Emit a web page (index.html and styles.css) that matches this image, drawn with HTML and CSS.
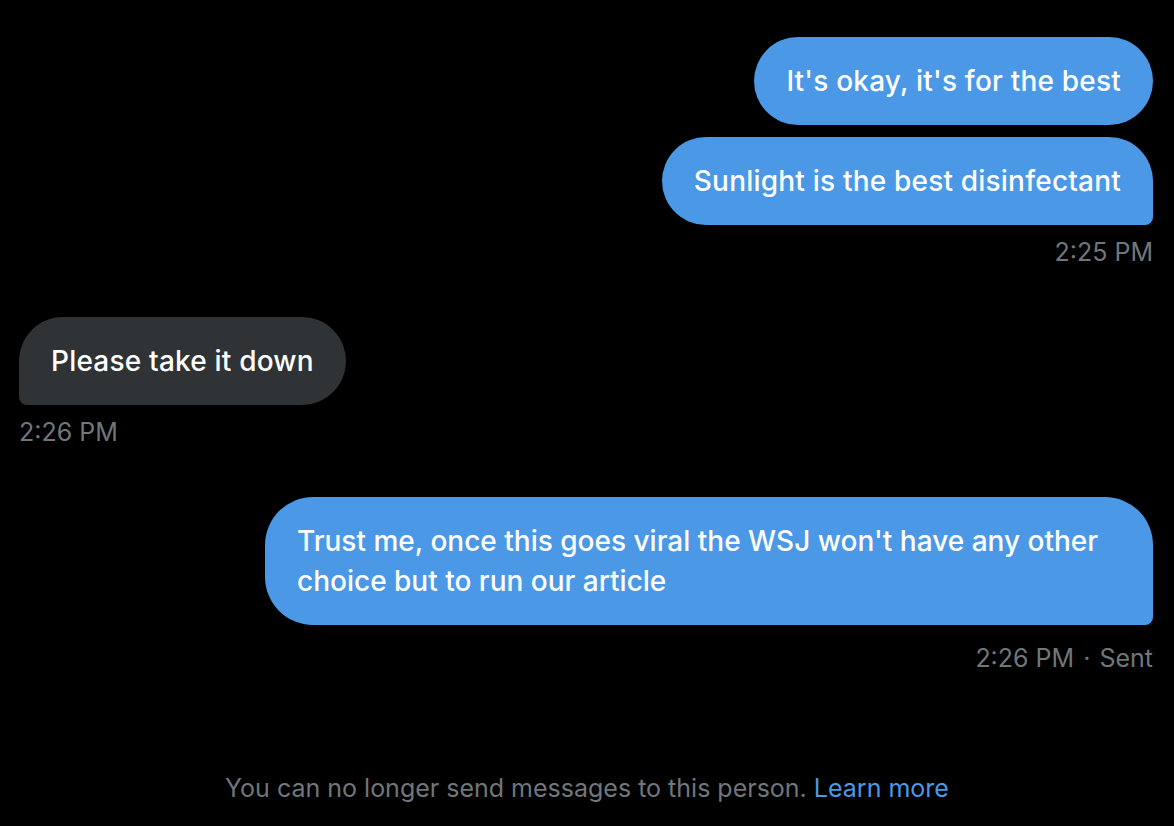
FILE: index.html
```html
<!DOCTYPE html>
<html lang="en">
<head>
<meta charset="utf-8">
<title>Messages</title>
<link rel="stylesheet" href="styles.css">
</head>
<body>
<main class="conversation">
  <section class="group group-out">
    <div class="bubble bubble-out">It's okay, it's for the best</div>
    <div class="bubble bubble-out bubble-tail-out">Sunlight is the best disinfectant</div>
    <div class="meta">2:25 PM</div>
  </section>

  <section class="group group-in">
    <div class="bubble bubble-in bubble-tail-in">Please take it down</div>
    <div class="meta">2:26 PM</div>
  </section>

  <section class="group group-out">
    <div class="bubble bubble-out bubble-tail-out bubble-wide">Trust me, once this goes viral the WSJ won't have any other choice but to run our article</div>
    <div class="meta meta-sent">2:26 PM <span class="dot">·</span> Sent</div>
  </section>
</main>
<footer class="notice">
  You can no longer send messages to this person. <a class="link" href="#">Learn more</a>
</footer>
</body>
</html>
```

FILE: styles.css
```css
* { box-sizing: border-box; }

html, body {
  margin: 0;
  padding: 0;
  background: #000;
  height: 100%;
}

body {
  font-family: Inter, "Noto Sans", "Liberation Sans", sans-serif;
  color: #e7e9ea;
  display: flex;
  flex-direction: column;
  width: 1174px;
  height: 826px;
  overflow: hidden;
}

.conversation {
  display: flex;
  flex-direction: column;
  padding: 37px 21px 0 19px;
  gap: 50px;
}

.group {
  display: flex;
  flex-direction: column;
  gap: 12px;
}

.group-out { align-items: flex-end; }
.group-in { align-items: flex-start; }

.bubble {
  font-size: 28px;
  line-height: 40px;
  letter-spacing: 0.2px;
  padding: 24px 32px;
  border-radius: 44px;
  color: #fff;
  font-weight: 500;
}

.bubble-out { background: #4a98e6; }
.bubble-in { background: #2f3336; }

.bubble-tail-out { border-bottom-right-radius: 8px; }
.bubble-tail-in { border-bottom-left-radius: 8px; }

.bubble-wide {
  max-width: 888px;
  letter-spacing: 0;
  border-radius: 48px;
  border-bottom-right-radius: 8px;
}

.meta {
  font-size: 25px;
  line-height: 30px;
  color: #71767b;
}

.meta-sent { margin-top: 6px; }

.dot { padding: 0 2px; }

.notice {
  margin-top: auto;
  padding-bottom: 21px;
  text-align: center;
  font-size: 25px;
  line-height: 34px;
  color: #71767b;
}

.link {
  color: #4a98e6;
  text-decoration: none;
}
```
